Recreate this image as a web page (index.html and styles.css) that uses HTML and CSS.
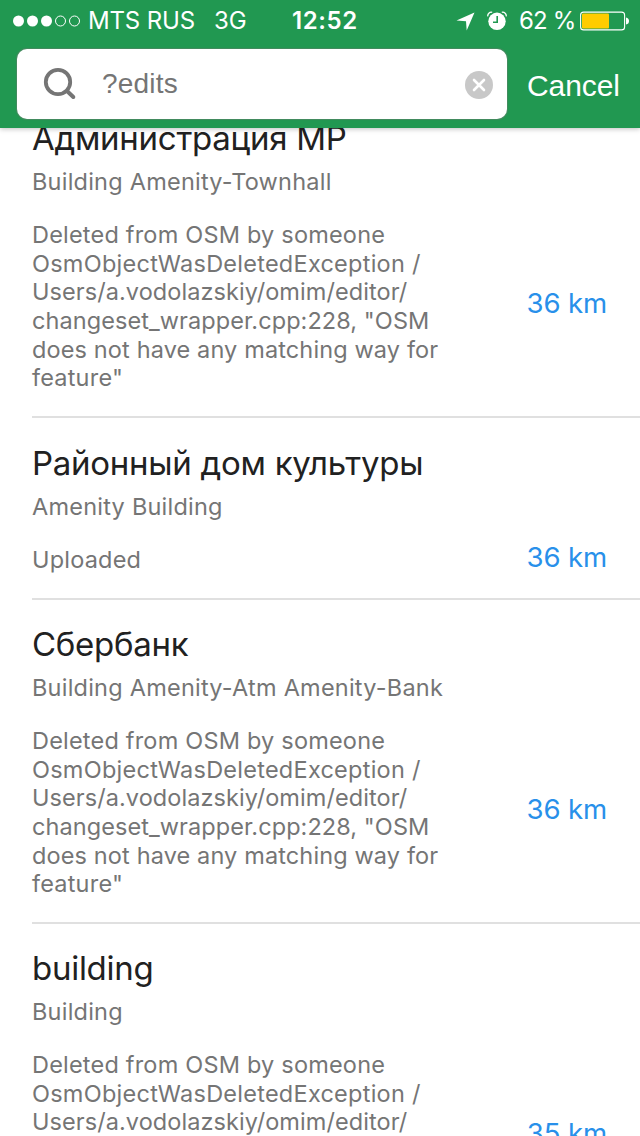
FILE: index.html
```
<!DOCTYPE html>
<html lang="en">
<head>
<meta charset="utf-8">
<title>Search</title>
<link rel="stylesheet" href="styles.css">
</head>
<body>
<div class="screen">
  <header class="header">
    <div class="status">
      <svg class="signal" width="68" height="12" viewBox="0 0 68 12"><g fill="#fff"><circle cx="5.5" cy="6" r="5.5"/><circle cx="19.5" cy="6" r="5.5"/><circle cx="33.5" cy="6" r="5.5"/></g><g fill="none" stroke="#fff"><circle cx="47.5" cy="6" r="5"/><circle cx="61.5" cy="6" r="5"/></g></svg>
      <span class="carrier">MTS RUS</span>
      <span class="network">3G</span>
      <span class="time">12:52</span>
      <svg class="location" width="20" height="20" viewBox="0 0 20 20"><path d="M18.5 1.5 10.7 19.5 10 10.3 .5 9.6z" fill="#fff"/></svg>
      <svg class="alarm" width="20" height="20" viewBox="0 0 20 20"><circle cx="10" cy="10.3" r="8.7" fill="#fff"/><path d="M10.2 5v6.2H6" fill="none" stroke="#219851" stroke-width="1.6"/><path d="M.8 5.4C.4 2.7 2.6.8 5.2 1.3M19.2 5.4C19.6 2.7 17.4.8 14.8 1.3" fill="none" stroke="#fff" stroke-width="1.3"/></svg>
      <span class="percent">62 %</span>
      <svg class="battery" width="50" height="20" viewBox="0 0 50 20"><rect x=".6" y="1.1" width="44" height="17.8" rx="3" fill="none" stroke="#fff" stroke-width="1.1"/><rect x="2" y="2.5" width="27" height="15" rx="1" fill="#fc0"/><path d="M46 6.5Q49 7 49 10T46 13.5z" fill="#fff"/></svg>
    </div>
    <div class="searchbar">
      <div class="field">
        <svg class="glass" width="34" height="34" viewBox="0 0 34 34"><circle cx="15" cy="15" r="12.2" fill="none" stroke="#757575" stroke-width="3.8"/><path d="M24 24l6.3 6" stroke="#757575" stroke-width="4" stroke-linecap="round"/></svg>
        <span class="query">?edits</span>
        <svg class="clear" width="28" height="28" viewBox="0 0 28 28"><circle cx="14" cy="14" r="14" fill="#c8c8c8"/><path d="M9 9l10 10M19 9L9 19" stroke="#fff" stroke-width="2.6" stroke-linecap="round"/></svg>
      </div>
      <span class="cancel">Cancel</span>
    </div>
  </header>
  <main class="results">
    <article class="item">
      <h2 class="title">Администрация МР</h2>
      <p class="kind">Building Amenity-Townhall</p>
      <div class="details">
        <p class="message">Deleted from OSM by someone<br><span class="exception">OsmObjectWasDeletedException /</span><br><span class="path">Users/a.vodolazskiy/omim/editor/<br>changeset_wrapper.cpp:228, "OSM</span><br><span class="reason">does not have any matching way for</span><br>feature"</p>
        <span class="distance">36 km</span>
      </div>
    </article>
    <article class="item short">
      <h2 class="title">Районный дом культуры</h2>
      <p class="kind">Amenity Building</p>
      <div class="details">
        <p class="message">Uploaded</p>
        <span class="distance">36 km</span>
      </div>
    </article>
    <article class="item">
      <h2 class="title">Сбербанк</h2>
      <p class="kind">Building Amenity-Atm Amenity-Bank</p>
      <div class="details">
        <p class="message">Deleted from OSM by someone<br><span class="exception">OsmObjectWasDeletedException /</span><br><span class="path">Users/a.vodolazskiy/omim/editor/<br>changeset_wrapper.cpp:228, "OSM</span><br><span class="reason">does not have any matching way for</span><br>feature"</p>
        <span class="distance">36 km</span>
      </div>
    </article>
    <article class="item">
      <h2 class="title">building</h2>
      <p class="kind">Building</p>
      <div class="details">
        <p class="message">Deleted from OSM by someone<br><span class="exception">OsmObjectWasDeletedException /</span><br><span class="path">Users/a.vodolazskiy/omim/editor/<br>changeset_wrapper.cpp:228, "OSM</span><br><span class="reason">does not have any matching way for</span><br>feature"</p>
        <span class="distance">35 km</span>
      </div>
    </article>
  </main>
</div>
</body>
</html>
```
FILE: styles.css
```
* { box-sizing: border-box; margin: 0; padding: 0; }
body { background: #fff; font-family: Inter, "Noto Sans", sans-serif; }
svg { display: block; flex: none; }
.screen { width: 640px; height: 1136px; overflow: hidden; display: flex; flex-direction: column; }
.header {
  position: relative;
  z-index: 1;
  flex: none;
  height: 128px;
  background: #219851;
  color: #fff;
  box-shadow: 0 1px 5px rgba(0, 0, 0, .25);
}
.status { display: flex; align-items: center; height: 41px; padding-left: 13px; font-size: 24px; line-height: 41px; white-space: nowrap; }
.status span { flex: none; }
.carrier { width: 126px; margin-left: 7px; letter-spacing: -.15px; }
.network { width: 78px; }
.time { width: 164px; font-weight: 600; letter-spacing: .6px; }
.alarm { margin-left: 11px; }
.percent { width: 61px; margin-left: 12px; letter-spacing: -.8px; }
.searchbar { display: flex; margin-top: 8px; padding-left: 17px; font-family: "Liberation Sans", Arial, sans-serif; }
.field { display: flex; align-items: center; width: 490px; height: 70px; padding-left: 26px; border-radius: 10px; background: #fff; box-shadow: 0 0 1px 1px rgba(90, 130, 105, .65); }
.query { width: 363px; margin-left: 25px; color: #757575; font-size: 28px; line-height: 70px; letter-spacing: .2px; }
.clear { margin-top: 2px; }
.cancel { margin-left: 20px; font-size: 30px; line-height: 74px; letter-spacing: -.1px; }
.results { flex: none; margin-top: -34px; }
.item { height: 324px; margin-left: 32px; padding-top: 24px; border-bottom: 2px solid #e0e0e0; }
.short { height: 182px; padding-top: 25px; }
.title { height: 50px; color: #212121; font-size: 33px; font-weight: 400; line-height: 40px; letter-spacing: -.27px; white-space: nowrap; }
.kind { height: 53.1px; color: #757575; font-size: 23.5px; line-height: 28.64px; letter-spacing: .23px; white-space: nowrap; }
.short .kind { height: 52.9px; }
.details { display: flex; align-items: center; justify-content: space-between; padding-right: 33px; }
.message { color: #757575; font-size: 23.5px; line-height: 28.64px; letter-spacing: .2px; white-space: nowrap; }
.exception { letter-spacing: .25px; }
.path { letter-spacing: .07px; }
.reason { letter-spacing: .13px; }
.distance { margin-bottom: 8px; color: #2890ea; font-size: 27.6px; line-height: 24px; letter-spacing: -.15px; white-space: nowrap; }
.short .distance { margin-bottom: 6px; line-height: 22px; }
```
